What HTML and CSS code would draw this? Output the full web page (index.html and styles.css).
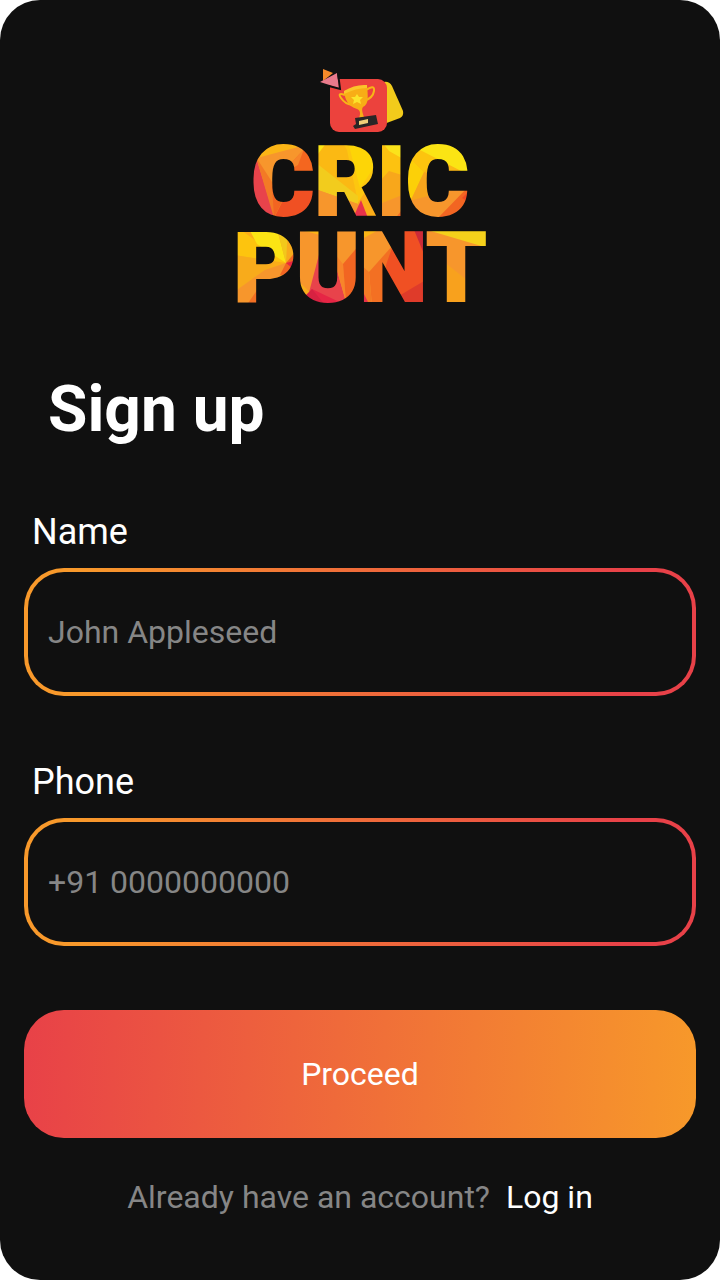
FILE: index.html
```html
<!DOCTYPE html>
<html lang="en">
<head>
<meta charset="utf-8">
<meta name="viewport" content="width=device-width, initial-scale=1">
<title>Cric Punt – Sign up</title>
<link rel="stylesheet" href="styles.css">
</head>
<body>
<main class="screen">
  <svg class="logo" viewBox="236 64 248 244" role="img" aria-label="Cric Punt">
    <defs>
      <pattern id="facets" patternUnits="userSpaceOnUse" x="230" y="64" width="260" height="250" viewBox="230 64 260 250">
        <rect x="230" y="64" width="260" height="250" fill="#f7962c"/>
        <!-- C -->
        <path fill="#fbb516" d="M244 136H304L302 146 253 159 244 160Z"/>
        <path fill="#fcd414" d="M244 140L262 140 253 159 246 166Z"/>
        <path fill="#e8434b" d="M246 172L256 157 275 218H246Z"/>
        <path fill="#f37a25" d="M256 157L274 185V218Z"/>
        <path fill="#f4661f" d="M281 174L306 147H315V178H281Z"/>
        <path fill="#f7852a" d="M281 174L304 149 298 165Z"/>
        <path fill="#f05023" d="M274 218L292 182H315V218Z"/>
        <path fill="#f26522" d="M272 186H290L274 218Z"/>
        <!-- R -->
        <path fill="#fbb913" d="M315 138H346L358 203 315 172Z"/>
        <path fill="#fde614" d="M315 138H330L315 158Z"/>
        <path fill="#fdc70f" d="M340 138H379V172L358 203 347 150Z"/>
        <path fill="#fdd507" d="M347 138H379V160L360 188Z"/>
        <path fill="#f2cc1d" d="M315 162L358 196V204L315 189Z"/>
        <path fill="#f7962c" d="M315 189L358 204V218H315Z"/>
        <path fill="#fbad18" d="M358 203L379 172V218H364Z"/>
        <path fill="#e8314a" d="M361 200L353 218H368Z"/>
        <!-- I -->
        <path fill="#fdc210" d="M379 138H405V220H379Z"/>
        <path fill="#fbe31b" d="M379 138H405V160L389 151Z"/>
        <path fill="#f8a71b" d="M379 182L389 171 405 176V195L379 204Z"/>
        <path fill="#f7962c" d="M379 204L405 194V220H379Z"/>
        <path fill="#f26a24" d="M394 220L405 206V220Z"/>
        <!-- C -->
        <path fill="#fcb714" d="M405 136H476V220H405Z"/>
        <path fill="#fcd008" d="M405 153L424 172 412 198H405Z"/>
        <path fill="#fdc40e" d="M405 153L420 143 438 157 424 172Z"/>
        <path fill="#fbe414" d="M420 136H462L471 176 420 150Z"/>
        <path fill="#f2c81b" d="M458 138H476V174H470Z"/>
        <path fill="#f8a51c" d="M424 172L442 177V192L410 202Z"/>
        <path fill="#f7962c" d="M405 202L471 185 440 220H405Z"/>
        <path fill="#f26522" d="M436 220L470 185H476V220Z"/>
        <path fill="#ef4923" d="M462 198L476 184V207Z"/>
        <!-- P -->
        <path fill="#fbad18" d="M234 225H297L286 263 234 280Z"/>
        <path fill="#fdc40e" d="M234 225L259 243 286 263 234 255Z"/>
        <path fill="#fbe414" d="M247 225H276L286 263 257 244Z"/>
        <path fill="#f2c81b" d="M276 225H297L286 263Z"/>
        <path fill="#f8ab1b" d="M288 225H297V262L286 263Z"/>
        <path fill="#f26522" d="M286 263L297 250V274L280 275Z"/>
        <path fill="#e8263f" d="M286 263L297 260V272Z"/>
        <path fill="#f8ab1b" d="M234 255L276 262 234 292Z"/>
        <path fill="#f37023" d="M246 306L260 286V306Z"/>
        <!-- U -->
        <path fill="#f7962c" d="M297 225H360V306H297Z"/>
        <path fill="#fbb515" d="M297 225H326L324 236 297 229Z"/>
        <path fill="#e8434b" d="M325 232L307 300 320 310 346 302 331 249Z"/>
        <path fill="#f8852a" d="M331 249L343 264 346 302Z"/>
        <path fill="#f26522" d="M343 264L360 244V306L346 302Z"/>
        <path fill="#f8ae1b" d="M297 280L312 294 306 300Z"/>
        <path fill="#e62545" d="M312 289L348 306H306V295Z"/>
        <path fill="#d72241" d="M312 289L326 306H305V297Z"/>
        <!-- N -->
        <path fill="#f7962c" d="M360 225H424V306H360Z"/>
        <path fill="#fbb515" d="M360 225H388L360 240Z"/>
        <path fill="#f37023" d="M393 245L369 272 372 306H400V250Z"/>
        <path fill="#f37a25" d="M360 264L369 272 372 306H360Z"/>
        <path fill="#f05023" d="M393 245L407 225H424V306H386V265Z"/>
        <path fill="#df3b2a" d="M392 300L424 281V306H394Z"/>
        <path fill="#cd2b38" d="M412 225H424V254Z"/>
        <path fill="#e8304a" d="M360 286L370 306H360Z"/>
        <!-- T -->
        <path fill="#f5d11b" d="M424 225H488V248L424 229Z"/>
        <path fill="#f8a11d" d="M439 258L467 280V306H439Z"/>
      </pattern>
    </defs>
    <path fill="#f2cb1b" d="M384 82Q389 81 392 86L403 111Q404 116 400 118L384 124Z"/>
    <rect x="330" y="79" width="57" height="53" rx="9" fill="#ec423d"/>
    <path fill="#f58a2a" d="M323 69L333 73 323 81Z"/>
    <path fill="#e97a8b" d="M320 82L337 73 339 88Z"/>
    <path fill="none" stroke="#101010" stroke-width="2" d="M338 73L340 89 329 86"/>
    <path fill="none" stroke="#f7b517" stroke-width="2" d="M345 95Q337 92 341 98T352 105M366 90Q375 84 374 91T364 101"/>
    <path fill="#f8ad16" d="M344 91L367 85C368 97 369 104 363 107 361 109 363 114 364 117L359 118C361 113 360 110 357 109 348 106 345 100 344 91Z"/>
    <path fill="#fbc52a" d="M344 91Q355 84 367 85L367 88Q356 88 344 94Z"/>
    <path fill="#fce32b" d="M357 94L359 97 363 97 360 100 361 104 357 102 353 104 354 100 351 97 355 97Z"/>
    <path fill="#292626" d="M355 118L376 115 378 124 355 129 353 126 356 124Z"/>
    <path fill="#f1cf78" d="M359 121L368 119 368 123 359 125Z"/>
    <text class="logo-word" x="360" y="215" text-anchor="middle" fill="url(#facets)" stroke="url(#facets)">CRIC</text>
    <text class="logo-word" x="360" y="301" text-anchor="middle" fill="url(#facets)" stroke="url(#facets)">PUNT</text>
  </svg>

  <h1 class="title">Sign up</h1>

  <form class="form">
    <div class="field">
      <label class="label" for="name">Name</label>
      <input class="input" id="name" type="text" placeholder="John Appleseed">
    </div>
    <div class="field">
      <label class="label" for="phone">Phone</label>
      <input class="input" id="phone" type="tel" placeholder="+91 0000000000">
    </div>
    <button class="submit" type="submit">Proceed</button>
  </form>

  <p class="footer"><span>Already have an account?</span><a class="link" href="#login">Log in</a></p>
</main>
</body>
</html>
```

FILE: styles.css
```css
* {
  box-sizing: border-box;
}

body {
  margin: 0;
  background: #fff;
  font-family: Roboto, "Liberation Sans", sans-serif;
}

.screen {
  display: flex;
  flex-direction: column;
  min-height: 100vh;
  padding: 64px 24px;
  border-radius: 40px;
  background: #101010;
  color: #fff;
}

.logo {
  align-self: center;
  width: 248px;
  height: 244px;
  overflow: visible;
}

.logo-word {
  font-family: Roboto, "Liberation Sans", sans-serif;
  font-size: 96px;
  font-weight: 900;
  stroke-width: 2px;
}

.title {
  margin: 64px 24px 62px;
  font-size: 64px;
  font-weight: 700;
  line-height: 76px;
}

.form {
  display: flex;
  flex-direction: column;
  gap: 64px;
}

.field {
  display: flex;
  flex-direction: column;
  gap: 14px;
}

.label {
  padding: 0 8px;
  font-size: 36px;
  line-height: 44px;
}

.input {
  width: 100%;
  height: 128px;
  padding: 0 20px;
  border: 4px solid transparent;
  border-radius: 40px;
  background:
    linear-gradient(#101010, #101010) padding-box,
    linear-gradient(90deg, #f8992b 8%, #e84148 90%) border-box;
  color: #fff;
  font: inherit;
  font-size: 32px;
}

.input::placeholder {
  color: #868686;
  opacity: 1;
}

.submit {
  height: 128px;
  border: 0;
  border-radius: 40px;
  background: linear-gradient(93deg, #e84148, #f7992a);
  color: #fff;
  font: inherit;
  font-size: 32px;
}

.footer {
  display: flex;
  justify-content: center;
  gap: 16px;
  margin: 40px 0 0;
  color: #868686;
  font-size: 32px;
  line-height: 38px;
}

.link {
  color: #fff;
  text-decoration: none;
}
```
